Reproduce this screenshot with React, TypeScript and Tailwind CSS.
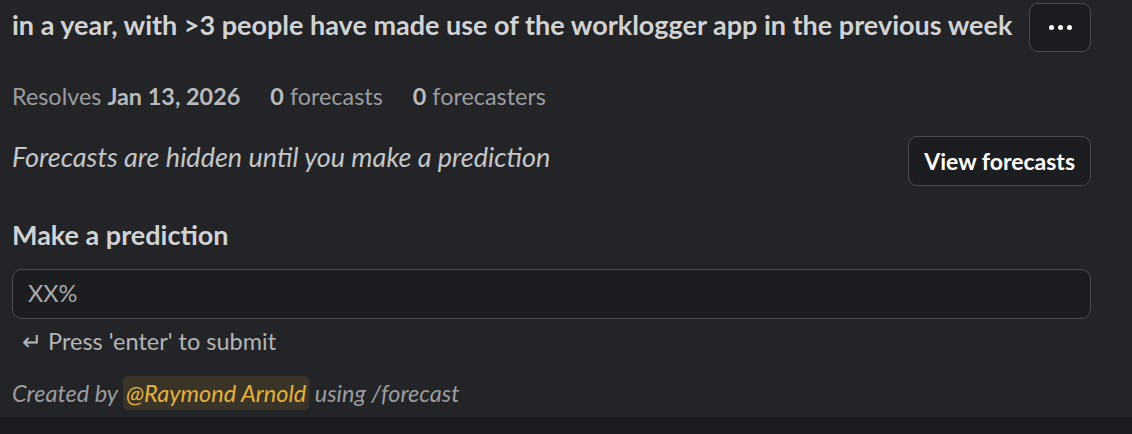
import React from 'react';

export default function App() {
  return (
    <div className="w-[1132px] h-[434px] bg-[#1b1c20] overflow-hidden" style={{ fontFamily: 'Lato, "Noto Sans", sans-serif' }}>
      <div className="h-[417px] bg-[#232428] pl-[12px] pr-[41px]">
        <div className="flex items-start justify-between pt-[3px]">
          <h1 className="text-[27px] font-bold text-[#d1d2d3] leading-[30px] pt-[7px] whitespace-nowrap">
            in a year, with &gt;3 people have made use of the worklogger app in the previous week
          </h1>
          <button className="w-[62px] h-[49px] shrink-0 rounded-[9px] border border-[#4a4b4f] bg-[#1c1d21] flex items-center justify-center gap-[4px]">
            <span className="w-[5px] h-[5px] rounded-full bg-white" />
            <span className="w-[5px] h-[5px] rounded-full bg-white" />
            <span className="w-[5px] h-[5px] rounded-full bg-white" />
          </button>
        </div>

        <div className="mt-[29px] flex gap-[30px] text-[23.4px] leading-[30px] text-[#9b9c9f]">
          <span>
            Resolves <b className="text-[#b9babc]">Jan 13, 2026</b>
          </span>
          <span>
            <b className="text-[#b9babc]">0</b> forecasts
          </span>
          <span>
            <b className="text-[#b9babc]">0</b> forecasters
          </span>
        </div>

        <div className="mt-[25px] flex items-center justify-between">
          <p className="italic text-[27px] text-[#c4c5c7] leading-[30px] -mt-[9px]">Forecasts are hidden until you make a prediction</p>
          <button className="h-[50px] px-[15px] rounded-[9px] border border-[#4a4b4f] bg-[#1c1d21] text-white font-bold text-[23px]">
            View forecasts
          </button>
        </div>

        <h2 className="mt-[34px] text-[27px] font-bold text-[#d1d2d3] leading-[30px]">Make a prediction</h2>

        <div className="mt-[19px] h-[50px] rounded-[10px] border border-[#4b4c50] bg-[#1c1d21] flex items-center px-[15px] text-[23.5px] text-[#a7a8aa]">
          XX%
        </div>

        <div className="mt-[7px] pl-[10px] text-[23.5px] leading-[30px] text-[#b3b4b6]">↵ Press 'enter' to submit</div>

        <div className="mt-[20px] italic text-[23.5px] leading-[34px] text-[#9b9c9f]">
          Created by{' '}
          <span className="inline-block rounded-[5px] bg-[#3a3428] text-[#e3b03c] px-[3px]">@Raymond Arnold</span>{' '}
          using /forecast
        </div>
      </div>
    </div>
  );
}
